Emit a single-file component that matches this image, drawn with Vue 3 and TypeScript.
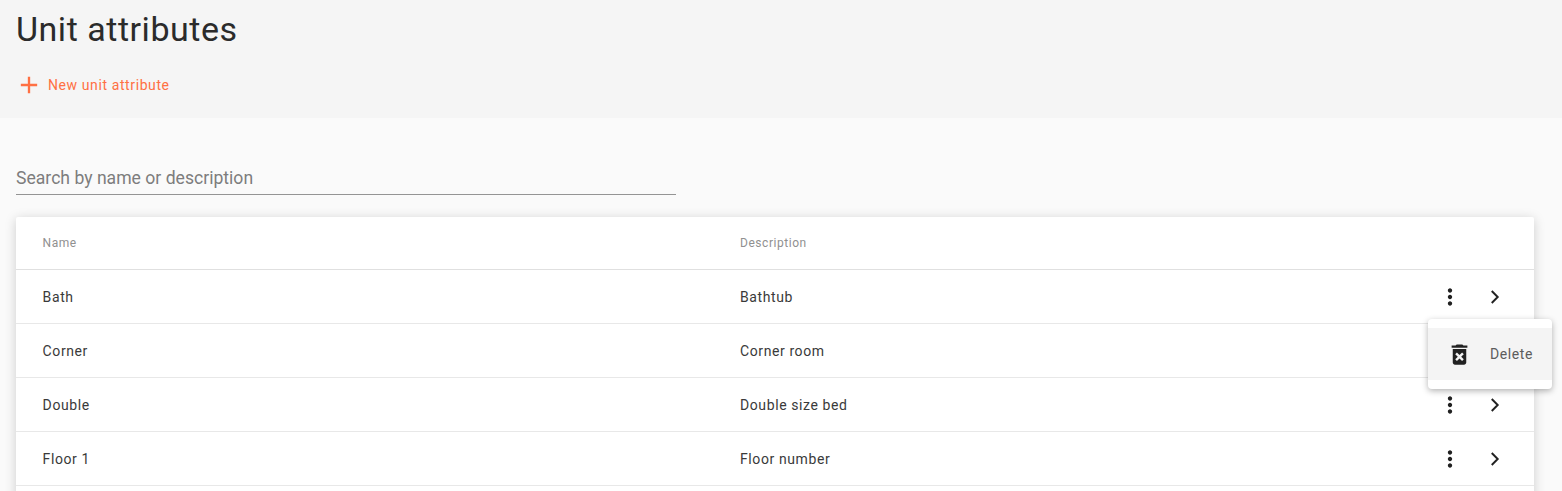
<script setup lang="ts">
interface Row { name: string; description: string; hidden: boolean }
const rows: Row[] = [
  { name: 'Bath', description: 'Bathtub', hidden: false },
  { name: 'Corner', description: 'Corner room', hidden: true },
  { name: 'Double', description: 'Double size bed', hidden: false },
  { name: 'Floor 1', description: 'Floor number', hidden: false },
]
</script>

<template>
  <div class="page">
    <header class="head">
      <h1 class="title">Unit attributes</h1>
      <button class="add" type="button">
        <svg width="28" height="28" viewBox="0 0 24 24"><path d="M19 13h-6v6h-2v-6H5v-2h6V5h2v6h6v2z" fill="#ff7043" /></svg>
        <span>New unit attribute</span>
      </button>
    </header>
    <main class="body">
      <div class="search">Search by name or description</div>
      <section class="table">
        <div class="row hdr">
          <div class="c1">Name</div>
          <div class="c2">Description</div>
        </div>
        <div v-for="r in rows" :key="r.name" class="row">
          <div class="c1">{{ r.name }}</div>
          <div class="c2">{{ r.description }}</div>
          <div class="acts" :class="{ off: r.hidden }">
            <svg width="26" height="26" viewBox="0 0 24 24"><path d="M12 8c1.1 0 2-.9 2-2s-.9-2-2-2-2 .9-2 2 .9 2 2 2zm0 2c-1.1 0-2 .9-2 2s.9 2 2 2 2-.9 2-2-.9-2-2-2zm0 6c-1.1 0-2 .9-2 2s.9 2 2 2 2-.9 2-2-.9-2-2-2z" fill="#212121" /></svg>
            <svg width="26" height="26" viewBox="0 0 24 24"><path d="M9 6.5L14.5 12 9 17.5" fill="none" stroke="#212121" stroke-width="1.8" /></svg>
          </div>
        </div>
        <div class="tail"></div>
      </section>
    </main>
    <div class="menu">
      <div class="item">
        <svg width="27" height="27" viewBox="0 0 24 24"><path d="M6 19c0 1.1.9 2 2 2h8c1.1 0 2-.9 2-2V7H6v12zm2.2-7.3l1.5-1.5 2.3 2.3 2.3-2.3 1.5 1.5-2.3 2.3 2.3 2.3-1.5 1.5-2.3-2.3-2.3 2.3-1.5-1.5 2.3-2.3-2.3-2.3zM15.5 4l-1-1h-5l-1 1H5v2h14V4z" fill="#212121" fill-rule="evenodd" /></svg>
        <span>Delete</span>
      </div>
    </div>
  </div>
</template>

<style>
html, body { margin: 0; height: 100%; overflow: hidden; background: #fafafa; }
</style>

<style scoped>
.page { position: relative; height: 491px; overflow: hidden; background: #fafafa; font-family: Roboto, "Liberation Sans", sans-serif; color: #212121; }
.head { height: 118px; background: #f5f5f5; padding: 0 16px; box-sizing: border-box; }
.title { margin: 0; padding-top: 7px; font-size: 34px; line-height: 44px; font-weight: 400; letter-spacing: 0.52px; color: #2b2b2b; }
.add { display: flex; align-items: center; gap: 5px; margin-top: 20px; padding: 0; border: 0; background: none; font: inherit; font-size: 14px; line-height: 28px; letter-spacing: 0.6px; color: #ff7043; }
.add svg { display: block; margin-left: -1px; }
.body { padding: 42px 28px 0 16px; }
.search { width: 660px; height: 35px; padding-top: 1px; box-sizing: border-box; border-bottom: 1px solid #949494; font-size: 17.6px; line-height: 35px; color: #7d7d7d; }
.table { margin-top: 22px; background: #fff; border-radius: 2px; box-shadow: 0 2px 12px rgba(0,0,0,.18); }
.row { display: flex; align-items: center; height: 54px; box-sizing: border-box; border-bottom: 1px solid #e8e8e8; font-size: 14px; letter-spacing: 0.6px; color: #3a3a3a; }
.hdr { height: 53px; border-bottom-color: #e0e0e0; font-size: 12px; letter-spacing: 0.55px; color: #909090; }
.c1 { width: 697.4px; margin-left: 26.6px; }
.c2 { flex: 1; }
.acts { display: flex; align-items: center; gap: 19px; margin-right: 26px; }
.acts svg { display: block; }
.acts.off { visibility: hidden; }
.tail { height: 40px; }
.menu { position: absolute; left: 1428px; top: 319px; width: 124px; height: 70px; padding: 9px 0; box-sizing: border-box; background: #fff; border-radius: 4px; box-shadow: 0 2px 6px rgba(0,0,0,.3); }
.item { display: flex; align-items: center; gap: 17px; height: 52px; padding-left: 18px; background: #f4f4f4; font-size: 14px; letter-spacing: 0.6px; color: #5c5c5c; }
.item svg { display: block; }
</style>
